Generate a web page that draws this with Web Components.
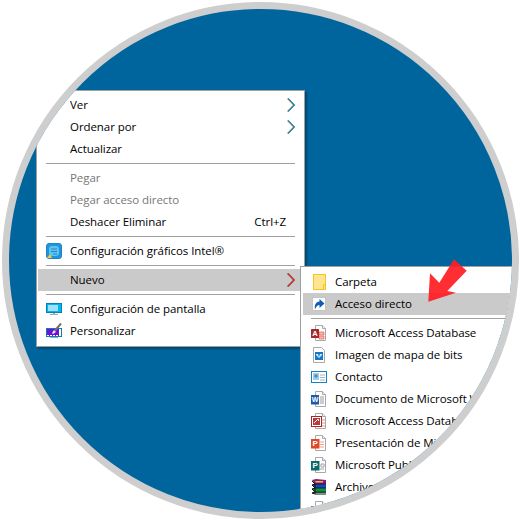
<!DOCTYPE html>
<html lang="es">
<head>
<meta charset="utf-8">
<title>Nuevo acceso directo</title>
<style>
  html, body { margin: 0; background: #fff; }
  body { width: 520px; height: 520px; overflow: hidden; font: 11.5px/22px "Open Sans", "Noto Sans", sans-serif; letter-spacing: -.07px; color: #000; }
  #main { left: 27px; top: 81px; width: 269px; }
  #sub { left: 291px; top: 257px; width: 260px; --side-pad: 2px; }
</style>
</head>
<body>
<ring-stage>
  <ctx-menu id="main">
    <ctx-item arrow>Ver</ctx-item>
    <ctx-item arrow>Ordenar por</ctx-item>
    <ctx-item>Actualizar</ctx-item>
    <ctx-sep></ctx-sep>
    <ctx-item disabled>Pegar</ctx-item>
    <ctx-item disabled>Pegar acceso directo</ctx-item>
    <ctx-item shortcut="Ctrl+Z">Deshacer Eliminar</ctx-item>
    <ctx-sep></ctx-sep>
    <ctx-item><ctx-icon slot="icon" name="intel"></ctx-icon>Configuración gráficos Intel®</ctx-item>
    <ctx-sep></ctx-sep>
    <ctx-item arrow active>Nuevo</ctx-item>
    <ctx-sep></ctx-sep>
    <ctx-item><ctx-icon slot="icon" name="display"></ctx-icon>Configuración de pantalla</ctx-item>
    <ctx-item><ctx-icon slot="icon" name="personalize"></ctx-icon>Personalizar</ctx-item>
  </ctx-menu>
  <ctx-menu id="sub">
    <ctx-item><ctx-icon slot="icon" name="folder"></ctx-icon>Carpeta</ctx-item>
    <ctx-item active><ctx-icon slot="icon" name="shortcut"></ctx-icon>Acceso directo</ctx-item>
    <ctx-sep></ctx-sep>
    <ctx-item><ctx-icon slot="icon" name="access"></ctx-icon>Microsoft Access Database</ctx-item>
    <ctx-item><ctx-icon slot="icon" name="bitmap"></ctx-icon>Imagen de mapa de bits</ctx-item>
    <ctx-item><ctx-icon slot="icon" name="contact"></ctx-icon>Contacto</ctx-item>
    <ctx-item><ctx-icon slot="icon" name="word"></ctx-icon>Documento de Microsoft Word</ctx-item>
    <ctx-item><ctx-icon slot="icon" name="access2"></ctx-icon>Microsoft Access Database</ctx-item>
    <ctx-item><ctx-icon slot="icon" name="powerpoint"></ctx-icon>Presentación de Microsoft PowerPoint</ctx-item>
    <ctx-item><ctx-icon slot="icon" name="publisher"></ctx-icon>Microsoft Publisher Document</ctx-item>
    <ctx-item><ctx-icon slot="icon" name="rar"></ctx-icon>Archivo WinRAR</ctx-item>
    <ctx-item><ctx-icon slot="icon" name="blank"></ctx-icon></ctx-item>
  </ctx-menu>
  <red-arrow></red-arrow>
</ring-stage>

<script>
// Icons are hand drawn on a 16x16 grid, same as the shell menu bitmaps.
var PAGE = '<path d="M4.500 .5h7l3 3v12h-10z" fill="#fff" stroke="#a8a8a8"/><path d="M11.500 .5v3h3" fill="#eee" stroke="#a8a8a8"/>';
var ICONS = {
  intel: '<rect x=".5" y=".5" width="15" height="15" rx="2.500" fill="#1a96dc" stroke="#2a7fc8"/>' +
    '<rect x="3" y="3" width="10" height="10" rx="3" fill="#5cc4ee"/>' +
    '<path d="M5 6h6M5 8.500h6M7 11h4" stroke="#2a86c8"/>' +
    '<path d="M1 15l3-4 2 4z" fill="#f2c84a"/>',
  display: '<rect x="0" y="2" width="16" height="10" fill="#0a7fb4"/>' +
    '<rect x="1" y="3" width="14" height="8" fill="#00b6f2"/>' +
    '<rect x="2" y="4" width="10" height="6" fill="#9fe0fb"/>' +
    '<rect x="7" y="12" width="2" height="1" fill="#9ab"/><rect x="4" y="13" width="8" height="1" fill="#9ab"/>',
  personalize: '<rect x="0" y="5" width="16" height="9" fill="#0a7fb4"/>' +
    '<rect x="1" y="6" width="14" height="7" fill="#fff"/>' +
    '<rect x="1" y="6" width="12" height="6" fill="#6a12dc"/>' +
    '<path d="M3 12.500h1M6 12.500h1M9 12.500h1M12 12.500h1" stroke="#6a12dc"/>' +
    '<rect x="4" y="14" width="8" height="1" fill="#9ab"/>' +
    '<path d="M6 10l2-3 2 2-3 2z" fill="#e8e8e8"/><path d="M9 7.500l6-7" stroke="#6f6f6f" stroke-width="2"/>',
  folder: '<rect x="2.500" y=".5" width="12" height="15" fill="#ffe58f" stroke="#f6c325"/>' +
    '<path d="M12.500 15.500v-5h2" fill="none" stroke="#f6c325"/>',
  shortcut: '<rect x="1.500" y="1.500" width="13" height="13" fill="#fff" stroke="#c4c4c4"/>' +
    '<path d="M4 13.500c-1-5 1.500-8 4.500-8V3L13.500 7.500l-5 4.500V9C6.500 9 5 10.500 4 13.500z" fill="#0f5fb0"/>',
  access: PAGE + '<path d="M8 7h5v3H8zM8 11h5v3H8z" fill="#f5b5b0" stroke="#d8504a" stroke-width=".6"/>' +
    '<rect x="0" y="4" width="8" height="9" rx=".5" fill="#a4282c"/>' +
    '<text x="4" y="11.200" text-anchor="middle" font-size="7.500" font-weight="700" fill="#fff" font-family="Liberation Sans">A</text>',
  access2: PAGE + '<path d="M11 7h3M11 10h3M11 13h3" stroke="#e09090"/>' +
    '<rect x=".5" y="3.500" width="10" height="10" fill="#fff" stroke="#a4282c"/>' +
    '<rect x="2" y="5" width="7" height="7" fill="#b83a3a"/><path d="M3 10l3-3M6 6.500h1.500V8" stroke="#fff"/>',
  bitmap: '<path d="M2.500 .5h8l3 3v12h-11z" fill="#fff" stroke="#a8a8a8"/>' +
    '<rect x="4" y="5" width="8" height="8" fill="#1878c8"/><path d="M5 7h2l1 3 1-3h2v1l-3 3-3-3z" fill="#cfe9fb"/>',
  contact: '<rect x=".5" y="2.500" width="15" height="11" fill="#fff" stroke="#1880c0"/>' +
    '<rect x="2" y="4" width="6" height="7" fill="#a0cdec"/><circle cx="5" cy="7" r="1.800" fill="#4f8fbf"/>' +
    '<path d="M9 6h5M9 8.500h5M9 11h5" stroke="#9ab6c8"/>',
  word: PAGE + '<path d="M9 6h4M9 8h4M9 10h4M9 12h4" stroke="#9a9a9a"/>' +
    '<rect x="0" y="4" width="8" height="9.500" fill="#1d5aa8"/>' +
    '<text x="4" y="11.200" text-anchor="middle" font-size="7" font-weight="700" fill="#fff" font-family="Liberation Sans">W</text>',
  powerpoint: PAGE + '<path d="M9 7h4M9 9.500h4M9 12h4" stroke="#f0a090" stroke-width="1.200"/>' +
    '<rect x="0" y="4" width="8.500" height="9.500" fill="#e0482a"/>' +
    '<text x="4.200" y="11.400" text-anchor="middle" font-size="8" font-weight="700" fill="#fff" font-family="Liberation Sans">P</text>',
  publisher: PAGE + '<path d="M10 7h3v3h-3zM9 12h4" fill="none" stroke="#a0a0a0"/>' +
    '<rect x="0" y="4" width="8.500" height="9.500" fill="#0c6a6a"/>' +
    '<text x="4.200" y="11.400" text-anchor="middle" font-size="8" font-weight="700" fill="#fff" font-family="Liberation Sans">P</text>',
  rar: '<path d="M1 1l4-1 10 1v4H4z" fill="#8a1a78"/><path d="M4 2l8 0v1.500H5z" fill="#e8c040"/>' +
    '<path d="M1 6l3-1h11v4H4z" fill="#1848b8"/><path d="M1 10l3-1h11v5H4z" fill="#109048"/>' +
    '<path d="M4 5v10M1 2l3 3-3 1 3 3-3 1 3 3-3 1 3 1h11" fill="none" stroke="#111"/>' +
    '<path d="M4 5h11M4 9h11M4 13h11" stroke="#111" stroke-width=".8"/>',
  blank: PAGE + '<rect x="0" y="5" width="9" height="9" fill="#1878c8"/>'
};

class RingStage extends HTMLElement {
  constructor() {
    super();
    this.attachShadow({ mode: 'open' }).innerHTML =
      '<style>:host{display:block;box-sizing:border-box;position:relative;width:517px;height:517px;margin:2px;' +
      'border:7px solid #cecece;border-radius:50%;background:#00659d;overflow:hidden}</style><slot></slot>';
  }
}

class CtxMenu extends HTMLElement {
  constructor() {
    super();
    this.attachShadow({ mode: 'open' }).innerHTML =
      '<style>:host{position:absolute;display:flex;flex-direction:column;box-sizing:border-box;' +
      'padding:3px var(--side-pad,1px) 4px;background:#fff;border:1px solid #a0a0a0;box-shadow:2px 2px 2px rgba(0,0,0,.3)}' +
      '</style><slot></slot>';
  }
  connectedCallback() {
    // the submenu starts one pixel lower inside its border
    if (this.id === 'sub') this.style.paddingTop = '4px';
  }
}

class CtxItem extends HTMLElement {
  constructor() {
    super();
    this.attachShadow({ mode: 'open' }).innerHTML =
      '<style>:host{display:flex;align-items:center;height:22px;padding-left:8px;white-space:nowrap}' +
      ':host([disabled]){color:#777}:host([active]){background:#cacaca}' +
      '.ic{display:flex;width:16px;height:16px;margin-right:8px;flex:none}' +
      '.label{flex:1}.key{padding-right:17px}.chev{display:block;flex:none;margin-right:8px}</style>' +
      '<span class="ic"><slot name="icon"></slot></span><span class="label"><slot></slot></span><span id="end"></span>';
  }
  connectedCallback() {
    var end = this.shadowRoot.getElementById('end');
    if (this.hasAttribute('shortcut')) {
      end.className = 'key';
      end.textContent = this.getAttribute('shortcut');
    } else if (this.hasAttribute('arrow')) {
      var active = this.hasAttribute('active');
      var under = active ? '#555' : '#e8843c', over = active ? '#d8302c' : '#0f86ba';
      end.className = 'chev';
      end.innerHTML = '<svg style="display:block" width="8" height="14" viewBox="0 0 8 14" fill="none">' +
        '<path d="M.5 .5l6.300 6.500-6.300 6.500" stroke="' + under + '" stroke-width="1.100"/>' +
        '<path d="M1.100 .5l6.300 6.500-6.300 6.500" stroke="' + over + '" stroke-width="1.100"/></svg>';
    }
  }
}

class CtxSep extends HTMLElement {
  constructor() {
    super();
    this.attachShadow({ mode: 'open' }).innerHTML =
      '<style>:host{display:block;height:1px;margin:3px 8px;background:#a0a0a0}</style>';
  }
}

class CtxIcon extends HTMLElement {
  constructor() { super(); this.attachShadow({ mode: 'open' }); }
  connectedCallback() {
    this.shadowRoot.innerHTML = '<style>:host{display:block;width:16px;height:16px}svg{display:block}</style>' +
      '<svg width="16" height="16" viewBox="0 0 16 16">' + (ICONS[this.getAttribute('name')] || '') + '</svg>';
  }
}

class RedArrow extends HTMLElement {
  constructor() {
    super();
    this.attachShadow({ mode: 'open' }).innerHTML =
      '<style>:host{position:absolute;left:411px;top:246px;width:50px;height:50px}svg{display:block}</style>' +
      '<svg width="50" height="50" viewBox="420 255 50 50">' +
      '<path d="M428.300 301.700L430 273.300l9.300 9.400L454 259.300l12.700 11.400-19.400 20.300 8.700 1.700z" fill="#ff1e23" fill-opacity=".93"/></svg>';
  }
}

customElements.define('ring-stage', RingStage);
customElements.define('ctx-menu', CtxMenu);
customElements.define('ctx-item', CtxItem);
customElements.define('ctx-sep', CtxSep);
customElements.define('ctx-icon', CtxIcon);
customElements.define('red-arrow', RedArrow);
</script>
</body>
</html>
